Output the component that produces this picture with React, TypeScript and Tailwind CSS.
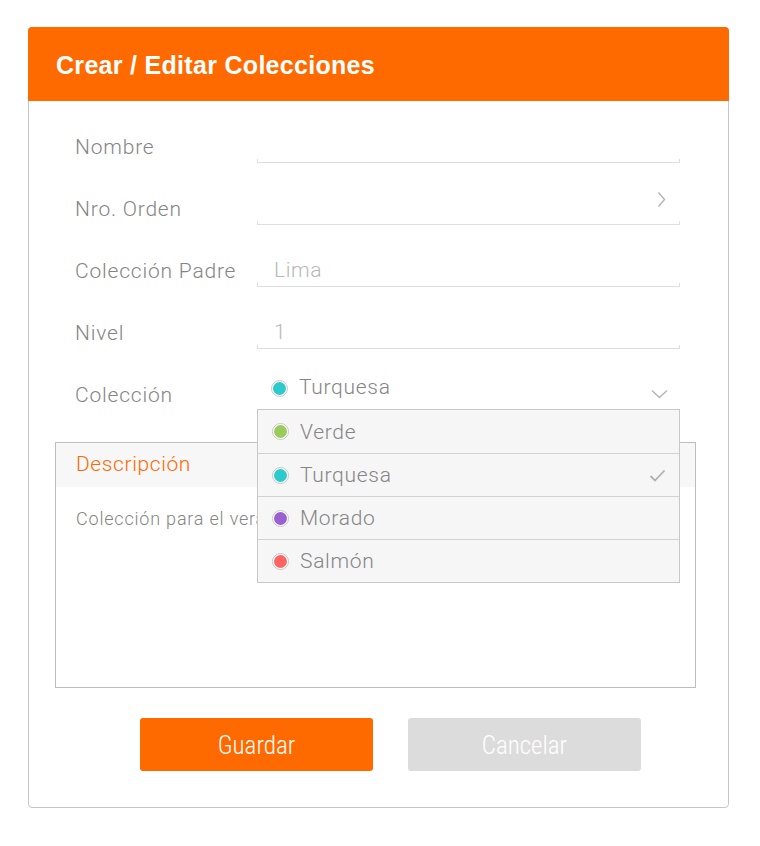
const font = { fontFamily: 'Roboto, "Liberation Sans", sans-serif' }
const cond = { fontFamily: '"Roboto Condensed", "Liberation Sans Narrow", Roboto, sans-serif' }

const options = [
  { name: "Verde", color: "bg-[#9acb5c]" },
  { name: "Turquesa", color: "bg-[#2ccaca]", selected: true },
  { name: "Morado", color: "bg-[#9a5fd0]" },
  { name: "Salmón", color: "bg-[#ff6464]" },
]

function Dot({ color }: { color: string }) {
  return (
    <span className="shrink-0 w-[17px] h-[17px] rounded-full border border-[#c8c8c8] bg-white p-[1px] flex">
      <span className={"w-full h-full rounded-full " + color} />
    </span>
  )
}

function Underline() {
  return <div className="h-[4px] border-x border-b border-[#dedede]" />
}

function Row({ label, children }: { label: string; children?: React.ReactNode }) {
  return (
    <div className="flex items-end h-[42px]">
      <div className="w-[182px] pb-[4px] text-[21px] leading-[24px] font-light tracking-[0.8px] text-[#858585]">
        {label}
      </div>
      <div className="w-[423px] relative">
        <div className="h-[38px] flex items-end pb-[1px] pl-[17px] pr-[14px] text-[21px] leading-[24px] font-light tracking-[0.6px] text-[#b8b8b8]">
          {children}
        </div>
        <Underline />
      </div>
    </div>
  )
}

export default function App() {
  return (
    <div className="min-h-screen bg-white pt-[27px] pl-[28px]" style={font}>
      <div className="w-[701px] border border-[#c6c6c6] rounded-[4px] pb-[36px]">
        <div className="h-[74px] -mx-px -mt-px bg-[#ff6a00] rounded-t-[4px] flex items-center pl-[28px] pt-[3px]">
          <h1
            className="text-white text-[25px] font-bold tracking-[0.3px]"
            style={{ fontFamily: '"Liberation Sans", Arial, sans-serif' }}
          >
            Crear / Editar Colecciones
          </h1>
        </div>

        <div className="pl-[46px] pt-[20px] flex flex-col gap-[20px]">
          <Row label="Nombre" />
          <Row label="Nro. Orden">
            <div className="flex-1" />
            <svg width="9" height="17" viewBox="0 0 9 17" className="mb-[12px]">
              <path d="M1.5 1.5 L7.5 8.5 L1.5 15.5" fill="none" stroke="#b4b4b4" strokeWidth="1.4" />
            </svg>
          </Row>
          <Row label="Colección Padre">Lima</Row>
          <Row label="Nivel">1</Row>
          <div className="flex items-end h-[42px] relative z-10">
            <div className="w-[182px] pb-[4px] text-[21px] leading-[24px] font-light tracking-[0.8px] text-[#858585]">
              Colección
            </div>
            <div className="w-[423px] relative self-stretch">
              <div className="h-[40px] flex items-center pl-[14px] pr-[12px] pb-[2px] text-[21px] font-light tracking-[0.7px] text-[#858585]">
                <Dot color="bg-[#2ccaca]" />
                <span className="ml-[11px]">Turquesa</span>
                <div className="flex-1" />
                <svg width="17" height="10" viewBox="0 0 17 10" className="mt-[12px]">
                  <path d="M1 1.5 L8.5 8.5 L16 1.5" fill="none" stroke="#b4b4b4" strokeWidth="1.4" />
                </svg>
              </div>
              <div className="absolute left-0 top-[40px] w-[423px] border border-[#c8c8c8] bg-[#f6f6f6]">
                {options.map((o, i) => (
                  <div
                    key={o.name}
                    className={
                      "h-[43px] flex items-center pl-[14px] pr-[13px] text-[21px] font-light tracking-[0.7px] text-[#858585] " +
                      (i > 0 ? "border-t border-[#d2d2d2]" : "")
                    }
                  >
                    <Dot color={o.color} />
                    <span className="ml-[11px] pt-[2px]">{o.name}</span>
                    <div className="flex-1" />
                    {o.selected && (
                      <svg width="17" height="13" viewBox="0 0 17 13">
                        <path d="M1.5 7 L6 11.5 L15.5 1.5" fill="none" stroke="#b0b0b0" strokeWidth="1.8" />
                      </svg>
                    )}
                  </div>
                ))}
              </div>
            </div>
          </div>
        </div>

        <div className="ml-[26px] mt-[31px] w-[641px] h-[246px] border border-[#bdbdbd]">
          <div className="h-[44px] bg-[#f7f7f7] flex items-center pl-[20px] text-[21px] font-light tracking-[0.6px] text-[#ff6a00]">
            Descripción
          </div>
          <div className="pl-[20px] pt-[18px] text-[18px] font-light tracking-[0.8px] text-[#858585]">
            Colección para el verano
          </div>
        </div>

        <div className="ml-[111px] mt-[30px] flex gap-[35px]" style={cond}>
          <button className="w-[233px] h-[53px] rounded-[3px] bg-[#ff6a00] text-white text-[25px] font-light pt-[3px]">
            Guardar
          </button>
          <button className="w-[233px] h-[53px] rounded-[3px] bg-[#dcdcdc] text-white text-[25px] font-light pt-[3px]">
            Cancelar
          </button>
        </div>
      </div>
    </div>
  )
}
